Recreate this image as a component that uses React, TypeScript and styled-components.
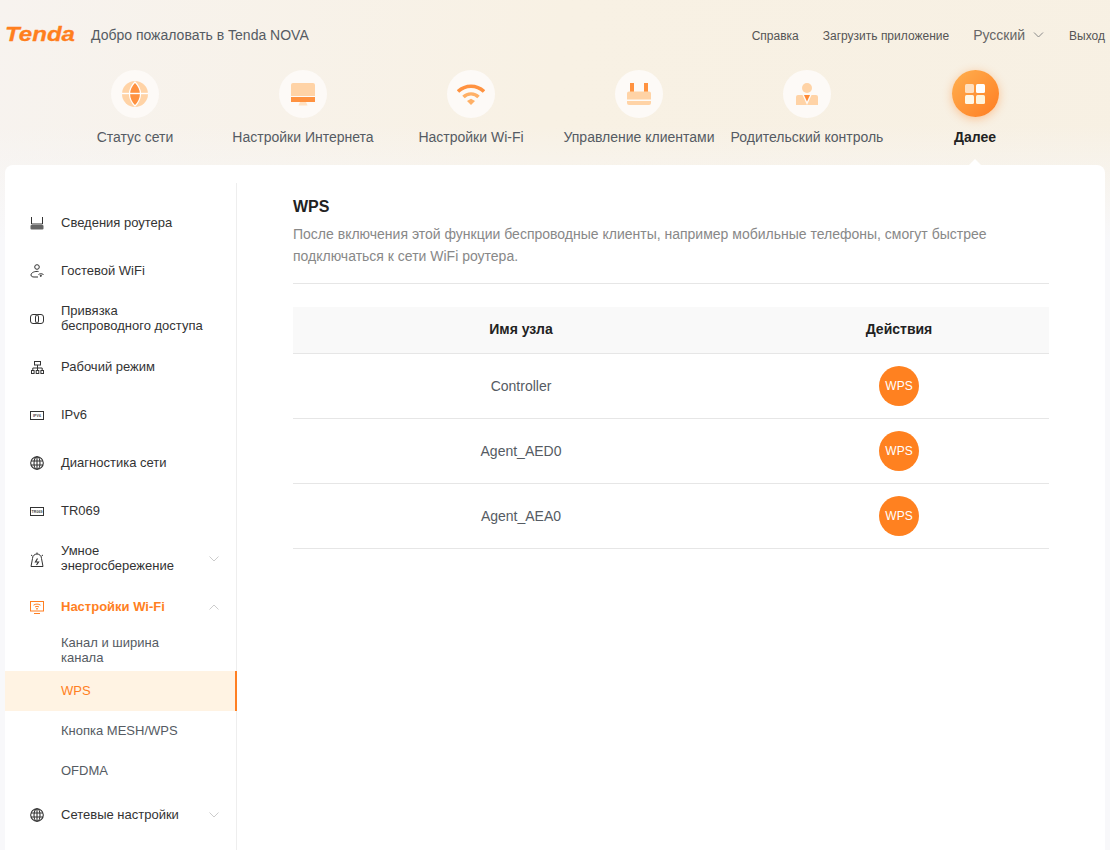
import React from "react";
import styled, { createGlobalStyle } from "styled-components";

const Global = createGlobalStyle`
  html, body { margin: 0; padding: 0; height: 100%; overflow: hidden; }
  body { font-family: "Liberation Sans", Arial, sans-serif; background: #f8f8fa; }
  #root { height: 100%; }
`;

const Page = styled.div`
  height: 850px;
  overflow: hidden;
  display: flex;
  flex-direction: column;
  background:
    linear-gradient(to bottom, rgba(248, 248, 250, 0) 125px, #f8f8fa 240px),
    linear-gradient(100deg, #f7f3ef 0%, #f8f1e4 45%, #f7f0e3 100%);
`;
const Top = styled.header`
  height: 70px;
  flex: none;
  display: flex;
  align-items: center;
  justify-content: space-between;
  padding: 0 5px;
`;
const Brand = styled.div`
  display: flex;
  align-items: center;
  gap: 12px;
`;
const Welcome = styled.span`
  font-size: 14px;
  color: #555b63;
`;
const TopLinks = styled.nav`
  display: flex;
  align-items: center;
  gap: 24px;
  font-size: 12px;
  color: #555;
`;
const TopLink = styled.span`
  padding-top: 2px;
`;
const Lang = styled.span`
  display: flex;
  align-items: center;
  gap: 8px;
  margin-right: 1px;
  font-size: 14px;
  color: #666;
`;
const NavBar = styled.nav`
  height: 95px;
  flex: none;
  display: flex;
  padding-left: 51px;
`;
const NavItem = styled.div<{ $active?: boolean }>`
  width: 168px;
  position: relative;
  display: flex;
  flex-direction: column;
  align-items: center;
  gap: 11px;
  font-size: 14px;
  line-height: 16px;
  white-space: nowrap;
  font-weight: ${(p) => (p.$active ? 700 : 400)};
  color: ${(p) => (p.$active ? "#222" : "#555b63")};
  ${(p) =>
    p.$active &&
    `&::after {
      content: "";
      position: absolute;
      bottom: 0;
      left: 50%;
      margin-left: -6px;
      border: 6px solid transparent;
      border-top: 0;
      border-bottom-color: #fff;
    }`}
`;
const Circle = styled.div<{ $active?: boolean }>`
  width: 48px;
  height: 48px;
  border-radius: 50%;
  display: flex;
  align-items: center;
  justify-content: center;
  background: ${(p) => (p.$active ? "linear-gradient(135deg, #ffb050 0%, #ff7d22 100%)" : "#fdfaf7")};
  ${(p) => p.$active && "box-shadow: 0 2px 10px rgba(255, 140, 50, 0.45); width: 47px; height: 47px; margin: 0 0 1px;"}
`;
const Panel = styled.main`
  flex: 1;
  min-height: 0;
  margin: 0 5px;
  padding-top: 18px;
  background: #fff;
  border-radius: 8px 8px 0 0;
  display: flex;
`;
const Sidebar = styled.aside`
  width: 232px;
  flex: none;
  box-sizing: border-box;
  padding-top: 15px;
  border-right: 1px solid #eee;
`;
const MenuRow = styled.div<{ $open?: boolean }>`
  height: 48px;
  display: flex;
  align-items: center;
  padding: 0 17px 0 25px;
  font-size: 13px;
  line-height: 15px;
  color: ${(p) => (p.$open ? "#ff7f22" : "#333")};
  font-weight: ${(p) => (p.$open ? 700 : 400)};
  &:first-child {
    margin-top: 1px;
  }
`;
const MenuIcon = styled.span`
  width: 14px;
  height: 15px;
  flex: none;
  margin-right: 17px;
  display: flex;
  align-items: center;
  justify-content: center;
`;
const MenuLabel = styled.span`
  flex: 1;
  max-width: 144px;
  margin-right: auto;
  margin-bottom: 2px;
`;
const SubRow = styled.div<{ $active?: boolean }>`
  height: 40px;
  box-sizing: border-box;
  display: flex;
  align-items: center;
  padding: 0 50px 2px 56px;
  font-size: 13px;
  line-height: 15px;
  color: ${(p) => (p.$active ? "#ff7f22" : "#555b63")};
  background: ${(p) => (p.$active ? "#fff3e3" : "transparent")};
  border-right: ${(p) => (p.$active ? "2px solid #ff7f22" : "0")};
  margin-right: ${(p) => (p.$active ? "-1px" : "0")};
`;
const Content = styled.section`
  flex: 1;
  padding: 14px 56px 0;
`;
const Title = styled.h1`
  margin: 0;
  font-size: 16px;
  line-height: 20px;
  font-weight: 700;
  color: #222;
`;
const Desc = styled.p`
  margin: 6px 0 0;
  padding-bottom: 16px;
  font-size: 14px;
  line-height: 22px;
  color: #888;
  border-bottom: 1px solid #e6e6e6;
`;
const Table = styled.div`
  margin-top: 23px;
`;
const Row = styled.div<{ $head?: boolean }>`
  display: grid;
  grid-template-columns: 456px 300px;
  align-items: center;
  justify-items: center;
  box-sizing: border-box;
  height: ${(p) => (p.$head ? 47 : 65)}px;
  padding-bottom: ${(p) => (p.$head ? 2 : 0)}px;
  font-size: 14px;
  border-bottom: 1px solid #e6e6e6;
  font-weight: ${(p) => (p.$head ? 700 : 400)};
  color: ${(p) => (p.$head ? "#222" : "#555b63")};
  background: ${(p) => (p.$head ? "#f9f9f9" : "transparent")};
`;
const WpsButton = styled.button`
  width: 40px;
  height: 40px;
  border: 0;
  padding: 0;
  border-radius: 50%;
  background: #ff8120;
  color: #fff;
  font: 12px "Liberation Sans", Arial, sans-serif;
`;

const C = { d: "#ff9240", l: "#ffd3a6", m: "#ffb066" };

const Logo = () => (
  <svg width="74" height="28" viewBox="0 0 74 28" aria-label="Tenda">
    <text x="0" y="20" textLength="70" lengthAdjust="spacingAndGlyphs" fontFamily="Liberation Sans" fontStyle="italic" fontWeight="700" fontSize="21" fill="#ff7f1e" stroke="#ff7f1e" strokeWidth="0.3">Tenda</text>
  </svg>
);

const Chevron = ({ up, color = "#ccc", w = 10 }: { up?: boolean; color?: string; w?: number }) => (
  <svg width={w} height="6" viewBox="0 0 10 6" fill="none" stroke={color} strokeWidth="1">
    <path d={up ? "M.5 5.5 5 1l4.5 4.5" : "M.5.5 5 5 9.5.5"} />
  </svg>
);

const GlobeBig = () => (
  <svg width="26" height="26" viewBox="0 0 26 26">
    <circle cx="13" cy="13" r="13" fill={C.l} />
    <path d="M13 1C17 5 18.500 9 18.500 13S17 21 13 25C9 21 7.500 17 7.500 13S9 5 13 1Z" fill={C.d} stroke="#fff" strokeWidth="1.200" />
    <path d="M0 12.500h26" stroke="#fff" strokeWidth="1.400" />
  </svg>
);
const MonitorBig = () => (
  <svg width="24" height="23" viewBox="0 0 24 23">
    <path d="M2 0h20a2 2 0 0 1 2 2v11H0V2a2 2 0 0 1 2-2Z" fill={C.l} />
    <rect y="14" width="24" height="5" fill={C.d} />
    <path d="M9 19h6l1.500 3.500h-9Z" fill="#ffe2c4" />
  </svg>
);
const WifiBig = () => (
  <svg width="28" height="21" viewBox="0 0 28 21" fill="none">
    <path d="M1 7.500C8.500 .5 19.500 .5 27 7.500" stroke={C.d} strokeWidth="3.600" />
    <path d="M6.500 13C10.500 8.800 17.500 8.800 21.500 13" stroke={C.m} strokeWidth="3.400" />
    <path d="M10 17 14 14.800 18 17 14 21Z" fill={C.m} />
  </svg>
);
const RouterBig = () => (
  <svg width="24" height="22" viewBox="0 0 24 22">
    <rect x="3" width="4" height="9" fill={C.d} />
    <rect x="17" width="4" height="9" fill={C.d} />
    <path d="M2 8.500h20a2 2 0 0 1 2 2v6H0v-6a2 2 0 0 1 2-2Z" fill={C.l} />
    <path d="M0 18h24v2a2 2 0 0 1-2 2H2a2 2 0 0 1-2-2Z" fill={C.l} />
  </svg>
);
const ParentBig = () => (
  <svg width="22" height="22" viewBox="0 0 22 22">
    <circle cx="11" cy="5" r="5" fill={C.l} />
    <path d="M2 12h18a2 2 0 0 1 2 2v8H0v-8a2 2 0 0 1 2-2Z" fill={C.l} />
    <path d="M6.500 12 11 22 15.500 12Z" fill="#fdfaf7" />
    <path d="M8 12h6l-3 6.500Z" fill="#ff8a35" />
  </svg>
);
const MoreBig = () => (
  <svg width="20" height="20" viewBox="0 0 20 20">
    <rect width="9" height="9" rx="1.500" fill="#ffe0c0" />
    <rect x="11" width="9" height="9" rx="1.500" fill="#fff" />
    <rect y="11" width="9" height="9" rx="1.500" fill="#fff8e8" />
    <rect x="11" y="11" width="9" height="9" rx="1.500" fill="#fff4dc" />
  </svg>
);

const S = { fill: "none", stroke: "#333", strokeWidth: 1 };
const RouterIcon = () => (
  <svg width="14" height="14" viewBox="0 0 14 14" {...S}>
    <path d="M1.500 1v7h11V1" />
    <rect x=".5" y="9" width="13" height="4.500" rx="1" fill="#666" stroke="none" />
  </svg>
);
const GuestIcon = () => (
  <svg width="14" height="14" viewBox="0 0 14 14" {...S}>
    <circle cx="7" cy="3" r="2.300" />
    <path d="M8.500 7.500C5 7 1 8.500 1 11c0 1.500 1.500 2 3 2h4" />
    <path d="M8.500 10.500c1.500-1 3-1 5 0" />
    <circle cx="10.800" cy="11.800" r=".6" fill="#333" />
  </svg>
);
const LinkIcon = () => (
  <svg width="14" height="10" viewBox="0 0 14 10" {...S}>
    <rect x=".5" y=".5" width="8" height="9" rx="2.500" />
    <rect x="5.500" y=".5" width="8" height="9" rx="2.500" />
  </svg>
);
const TreeIcon = () => (
  <svg width="13" height="13" viewBox="0 0 13 13" {...S}>
    <rect x="3.500" y=".5" width="6" height="3.500" />
    <path d="M6.500 4v3M1.800 9.500V7h9.400v2.500M6.500 7v2.500" />
    <rect x=".5" y="9.500" width="2.600" height="3" />
    <rect x="5.200" y="9.500" width="2.600" height="3" />
    <rect x="9.900" y="9.500" width="2.600" height="3" />
  </svg>
);
const LabelBox = ({ text }: { text: string }) => (
  <svg width="14" height="9" viewBox="0 0 14 9" fill="none">
    <rect x=".5" y=".5" width="13" height="8" stroke="#333" />
    <text x="7" y="6" textAnchor="middle" fontFamily="Liberation Sans" fontWeight="700" fontSize="3.600" fill="#444">{text}</text>
  </svg>
);
const GlobeIcon = () => (
  <svg width="14" height="14" viewBox="0 0 14 14" {...S} strokeWidth={1.100}>
    <circle cx="7" cy="7" r="6.300" />
    <ellipse cx="7" cy="7" rx="3" ry="6.300" />
    <path d="M1 5h12M1 9h12M7 .7v12.600" />
  </svg>
);
const PowerIcon = () => (
  <svg width="14" height="15" viewBox="0 0 14 15" {...S}>
    <path d="M1 14.500h12l-1.500-8a4.500 4.500 0 0 0-9 0ZM7 .5V2M1 3l1.500 1M13 3l-1.500 1" />
    <path d="M7.500 6.500 5.500 10h3l-2 3" strokeWidth="1.200" />
  </svg>
);
const WifiScreenIcon = () => (
  <svg width="14" height="13" viewBox="0 0 14 13" fill="none" stroke="#ff7f22">
    <rect x=".5" y=".5" width="13" height="9.500" />
    <path d="M4 12.500h6M3.500 4.200c2-1.500 5-1.500 7 0M5 6c1.200-.8 2.800-.8 4 0" />
    <path d="M7 7v1.500" strokeWidth="1.500" />
  </svg>
);

const navItems = [
  { label: "Статус сети", icon: <GlobeBig /> },
  { label: "Настройки Интернета", icon: <MonitorBig /> },
  { label: "Настройки Wi-Fi", icon: <WifiBig /> },
  { label: "Управление клиентами", icon: <RouterBig /> },
  { label: "Родительский контроль", icon: <ParentBig /> },
  { label: "Далее", icon: <MoreBig />, active: true },
];

const menu = [
  { label: "Сведения роутера", icon: <RouterIcon /> },
  { label: "Гостевой WiFi", icon: <GuestIcon /> },
  { label: "Привязка беспроводного доступа", icon: <LinkIcon /> },
  { label: "Рабочий режим", icon: <TreeIcon /> },
  { label: "IPv6", icon: <LabelBox text="IPV6" /> },
  { label: "Диагностика сети", icon: <GlobeIcon /> },
  { label: "TR069", icon: <LabelBox text="TR069" /> },
  { label: "Умное энергосбережение", icon: <PowerIcon />, chevron: true },
];

const subs = [
  { label: "Канал и ширина канала" },
  { label: "WPS", active: true },
  { label: "Кнопка MESH/WPS" },
  { label: "OFDMA" },
];

export default function App() {
  return (
    <Page>
      <Global />
      <Top>
        <Brand>
          <Logo />
          <Welcome>Добро пожаловать в Tenda NOVA</Welcome>
        </Brand>
        <TopLinks>
          <TopLink>Справка</TopLink>
          <TopLink>Загрузить приложение</TopLink>
          <Lang>
            Русский <Chevron color="#888" w={11} />
          </Lang>
          <TopLink>Выход</TopLink>
        </TopLinks>
      </Top>
      <NavBar>
        {navItems.map((n) => (
          <NavItem key={n.label} $active={n.active}>
            <Circle $active={n.active}>{n.icon}</Circle>
            {n.label}
          </NavItem>
        ))}
      </NavBar>
      <Panel>
        <Sidebar>
          {menu.map((m) => (
            <MenuRow key={m.label}>
              <MenuIcon>{m.icon}</MenuIcon>
              <MenuLabel>{m.label}</MenuLabel>
              {m.chevron && <Chevron />}
            </MenuRow>
          ))}
          <MenuRow $open>
            <MenuIcon>
              <WifiScreenIcon />
            </MenuIcon>
            <MenuLabel>Настройки Wi-Fi</MenuLabel>
            <Chevron up />
          </MenuRow>
          {subs.map((s) => (
            <SubRow key={s.label} $active={s.active}>
              {s.label}
            </SubRow>
          ))}
          <MenuRow>
            <MenuIcon>
              <GlobeIcon />
            </MenuIcon>
            <MenuLabel>Сетевые настройки</MenuLabel>
            <Chevron />
          </MenuRow>
        </Sidebar>
        <Content>
          <Title>WPS</Title>
          <Desc>
            После включения этой функции беспроводные клиенты, например мобильные телефоны, смогут быстрее подключаться к сети WiFi роутера.
          </Desc>
          <Table>
            <Row $head>
              <span>Имя узла</span>
              <span>Действия</span>
            </Row>
            {["Controller", "Agent_AED0", "Agent_AEA0"].map((name) => (
              <Row key={name}>
                <span>{name}</span>
                <WpsButton>WPS</WpsButton>
              </Row>
            ))}
          </Table>
        </Content>
      </Panel>
    </Page>
  );
}
